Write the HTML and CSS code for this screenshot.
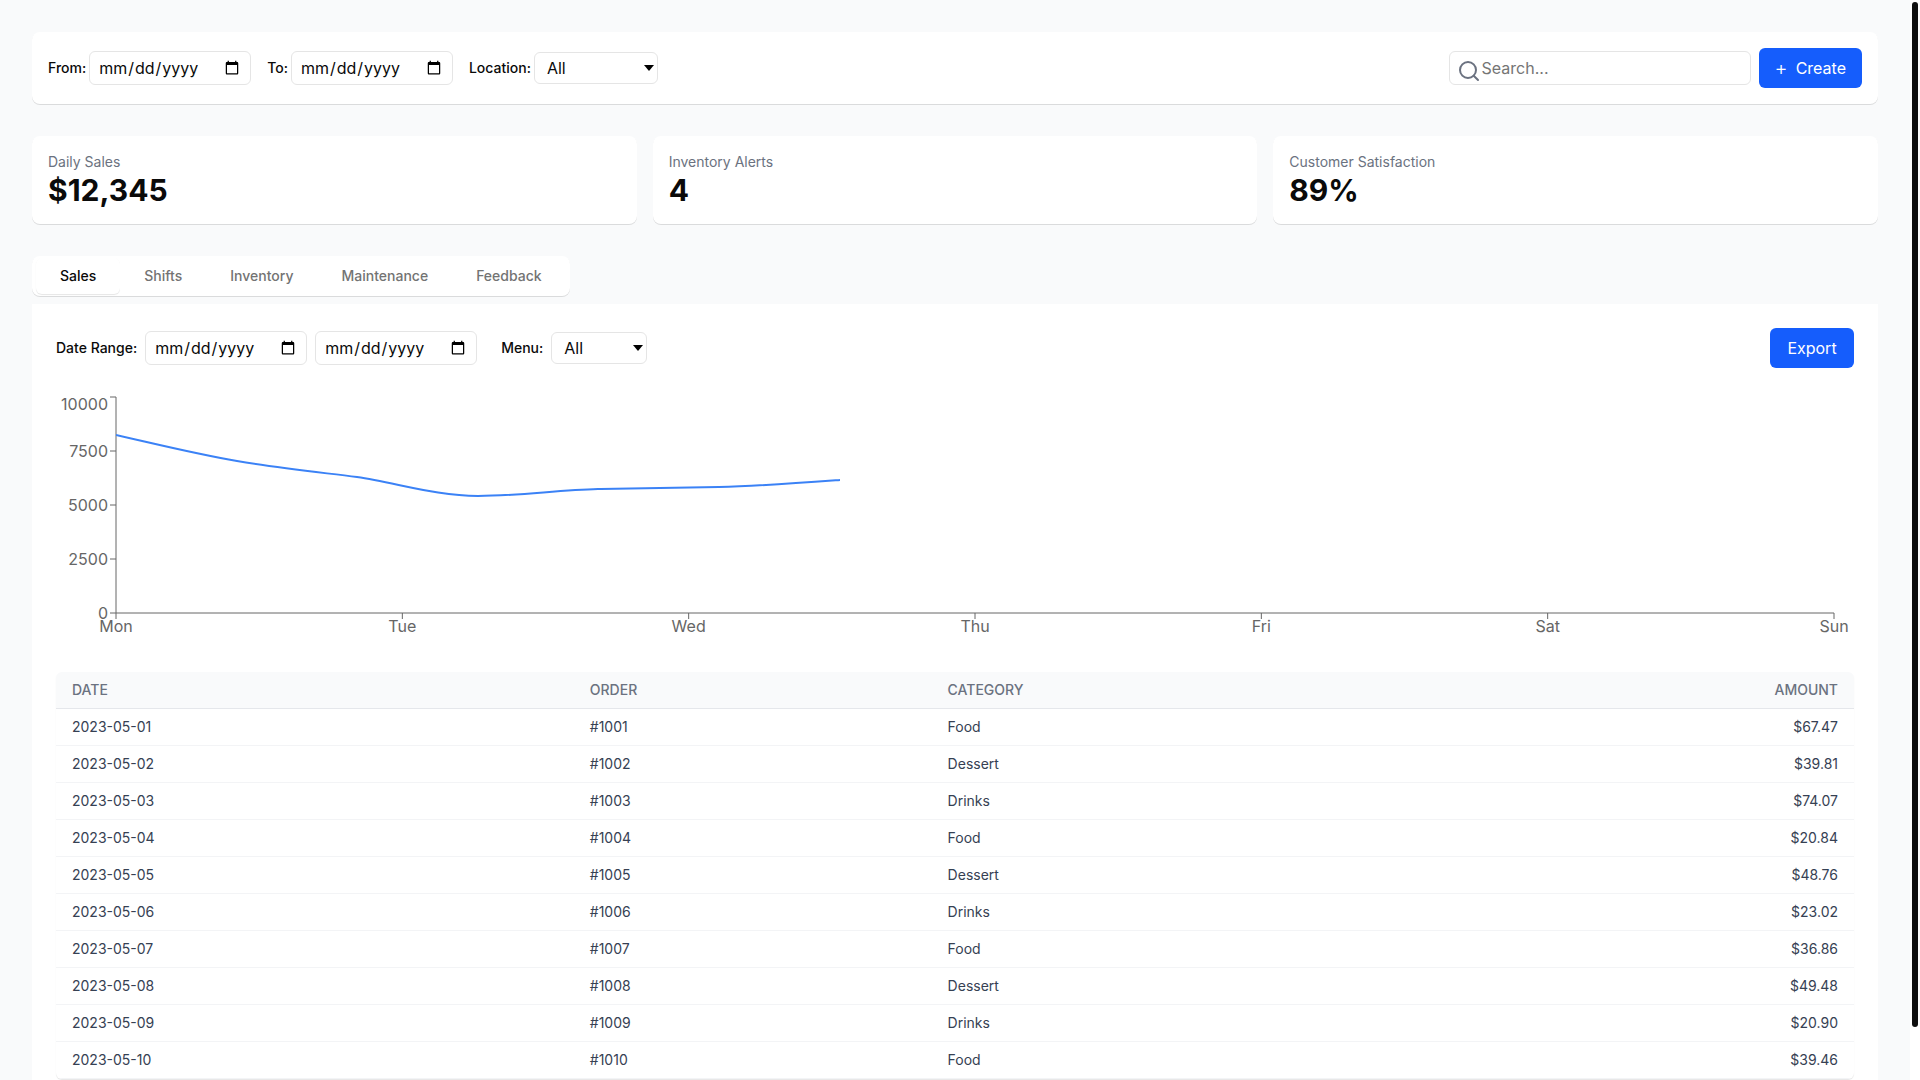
FILE: index.html
```html
<!DOCTYPE html>
<html lang="en">
<head>
<meta charset="utf-8">
<meta name="viewport" content="width=device-width, initial-scale=1">
<title>Restaurant Dashboard</title>
<link rel="stylesheet" href="styles.css">
</head>
<body>
<div class="viewport">
<main class="page">
  <header class="toolbar card">
    <div class="filters">
      <div class="field"><label for="from">From:</label><input class="control" type="date" id="from"></div>
      <div class="field"><label for="to">To:</label><input class="control" type="date" id="to"></div>
      <div class="field"><label for="location">Location:</label><select class="control select-location" id="location"><option>All</option><option>Downtown</option><option>Uptown</option></select></div>
    </div>
    <div class="actions">
      <div class="search">
        <svg class="search-icon" viewBox="0 0 24 24" aria-hidden="true"><circle cx="11" cy="11" r="8"/><path d="m21 21-4.3-4.3"/></svg>
        <input class="control search-input" type="search" placeholder="Search..." aria-label="Search">
      </div>
      <button class="button" type="button"><span class="plus">+</span><span>Create</span></button>
    </div>
  </header>

  <section class="stats">
    <article class="stat card"><h2>Daily Sales</h2><p>$12,345</p></article>
    <article class="stat card"><h2>Inventory Alerts</h2><p>4</p></article>
    <article class="stat card"><h2>Customer Satisfaction</h2><p>89%</p></article>
  </section>

  <section class="reports">
    <div class="tabs card" role="tablist">
      <button class="tab active" role="tab" aria-selected="true" type="button">Sales</button>
      <button class="tab" role="tab" aria-selected="false" type="button">Shifts</button>
      <button class="tab" role="tab" aria-selected="false" type="button">Inventory</button>
      <button class="tab" role="tab" aria-selected="false" type="button">Maintenance</button>
      <button class="tab" role="tab" aria-selected="false" type="button">Feedback</button>
    </div>
    <div class="panel" role="tabpanel">
      <div class="panel-head">
        <div class="panel-filters">
          <div class="field wide"><label for="start">Date Range:</label><input class="control" type="date" id="start"><input class="control" type="date" aria-label="End date"></div>
          <div class="field wide"><label for="menu">Menu:</label><select class="control select-menu" id="menu"><option>All</option><option>Food</option><option>Drinks</option><option>Dessert</option></select></div>
        </div>
        <button class="button" type="button">Export</button>
      </div>

      <div class="chart">
        <svg class="plot" role="img" aria-label="Sales by day">
          <g class="axis">
            <line x1="0" y1="0" x2="0" y2="216"/>
            <line x1="-6" y1="0" x2="0" y2="0"/><line x1="-6" y1="54" x2="0" y2="54"/><line x1="-6" y1="108" x2="0" y2="108"/><line x1="-6" y1="162" x2="0" y2="162"/><line x1="-6" y1="216" x2="0" y2="216"/>
            <line x1="0" y1="216" x2="100%" y2="216"/>
            <line x1="0" y1="216" x2="0" y2="222"/><line x1="16.667%" y1="216" x2="16.667%" y2="222"/><line x1="33.333%" y1="216" x2="33.333%" y2="222"/><line x1="50%" y1="216" x2="50%" y2="222"/><line x1="66.667%" y1="216" x2="66.667%" y2="222"/><line x1="83.333%" y1="216" x2="83.333%" y2="222"/><line x1="100%" y1="216" x2="100%" y2="222"/>
          </g>
          <g class="labels-y"><text x="-8" y="13">10000</text><text x="-8" y="60">7500</text><text x="-8" y="114">5000</text><text x="-8" y="168">2500</text><text x="-8" y="222">0</text></g>
          <g class="labels-x"><text x="0" y="235">Mon</text><text x="16.667%" y="235">Tue</text><text x="33.333%" y="235">Wed</text><text x="50%" y="235">Thu</text><text x="66.667%" y="235">Fri</text><text x="83.333%" y="235">Sat</text><text x="100%" y="235">Sun</text></g>
          <svg width="100%" height="216" viewBox="0 0 1718 216" preserveAspectRatio="none"><path class="series" d="M0 38C40 47 80 57 121 64C161 71 201 75 241 80C281 86 321 99 362 99C402 99 442 93 482 92C522 91 562 91 603 90C643 89 683 86 724 83"/></svg>
        </svg>
      </div>

      <div class="table-wrap">
        <table>
          <thead><tr><th class="col-date">Date</th><th class="col-order">Order</th><th>Category</th><th class="num">Amount</th></tr></thead>
          <tbody>
            <tr><td>2023-05-01</td><td>#1001</td><td>Food</td><td class="num">$67.47</td></tr>
            <tr><td>2023-05-02</td><td>#1002</td><td>Dessert</td><td class="num">$39.81</td></tr>
            <tr><td>2023-05-03</td><td>#1003</td><td>Drinks</td><td class="num">$74.07</td></tr>
            <tr><td>2023-05-04</td><td>#1004</td><td>Food</td><td class="num">$20.84</td></tr>
            <tr><td>2023-05-05</td><td>#1005</td><td>Dessert</td><td class="num">$48.76</td></tr>
            <tr><td>2023-05-06</td><td>#1006</td><td>Drinks</td><td class="num">$23.02</td></tr>
            <tr><td>2023-05-07</td><td>#1007</td><td>Food</td><td class="num">$36.86</td></tr>
            <tr><td>2023-05-08</td><td>#1008</td><td>Dessert</td><td class="num">$49.48</td></tr>
            <tr><td>2023-05-09</td><td>#1009</td><td>Drinks</td><td class="num">$20.90</td></tr>
            <tr><td>2023-05-10</td><td>#1010</td><td>Food</td><td class="num">$39.46</td></tr>
          </tbody>
        </table>
      </div>
    </div>
  </section>
</main>
<div class="scrollbar" aria-hidden="true"><div class="thumb"></div></div>
</div>
</body>
</html>
```
FILE: styles.css
```css
*, *::before, *::after { box-sizing: border-box; }

body {
  margin: 0;
  background: #f9fafb;
  color: #0a0a0a;
  font-family: Inter, "Liberation Sans", sans-serif;
  font-size: 16px;
  line-height: 24px;
}

h2, p { margin: 0; }

input, select, button {
  font: inherit;
  color: inherit;
  margin: 0;
}

.viewport { display: flex; height: 100vh; }

.page {
  flex: 1;
  min-width: 0;
  overflow-y: auto;
  scrollbar-width: none;
  padding: 32px;
}

.page > * + * { margin-top: 32px; }

.scrollbar { width: 10px; padding: 2px; background: #fff; }
.thumb { height: 95.25%; border-radius: 3px; background: #0f0f0f; }

.card {
  background: #fff;
  border-radius: 8px;
  box-shadow: 0 1px 0 rgba(0, 0, 0, 0.12);
}

.toolbar {
  display: flex;
  justify-content: space-between;
  align-items: center;
  padding: 16px;
}

.filters { display: flex; align-items: center; gap: 16px; }
.actions { display: flex; align-items: center; gap: 8px; }
.field { display: flex; align-items: center; gap: 3px; }
.field.wide { gap: 8px; }

label { font-size: 14px; line-height: 20px; font-weight: 500; }

.control {
  border: 1px solid #e5e5e5;
  border-radius: 6px;
  background: #fff;
  padding: 4px 8px;
  height: 34px;
}

input[type="date"] { width: 162px; }

select.control {
  height: 32px;
  padding: 0 12px;
  appearance: none;
  background: #fff url("data:image/svg+xml,%3Csvg xmlns='http://www.w3.org/2000/svg' width='10' height='6'%3E%3Cpath d='M0 0h10L5 6z'/%3E%3C/svg%3E") no-repeat right 3px center;
}

.select-location { width: 124px; }
.select-menu { width: 96px; }

.search { position: relative; }
.search-input { display: block; width: 302px; padding-left: 32px; }
.search-icon {
  position: absolute;
  left: 8px;
  top: 8px;
  width: 24px;
  height: 24px;
  fill: none;
  stroke: #6b7280;
  stroke-width: 2;
  stroke-linecap: round;
}

.button {
  display: flex;
  align-items: center;
  justify-content: center;
  gap: 8px;
  min-width: 84px;
  height: 40px;
  padding: 0 16px;
  border: 0;
  border-radius: 6px;
  background: #155dfc;
  color: #fff;
}

.plus { font-size: 20px; font-weight: 300; }

.stats {
  display: grid;
  grid-template-columns: repeat(3, 1fr);
  gap: 16px;
}

.stat { padding: 16px; }
.stat h2 { color: #6b7280; font-size: 14px; line-height: 20px; font-weight: 400; }
.stat p { font-size: 30px; line-height: 36px; font-weight: 700; }

.reports {
  display: flex;
  flex-direction: column;
  align-items: flex-start;
  gap: 8px;
}

.tabs { display: flex; padding: 2px 4px; }

.tab {
  height: 36px;
  padding: 0 24px;
  border: 0;
  border-radius: 6px;
  background: #fff;
  color: #737373;
  font-size: 14px;
  line-height: 20px;
  font-weight: 500;
}

.tab.active { color: #0a0a0a; box-shadow: 0 1px 1px rgba(0, 0, 0, 0.1); }

.panel { align-self: stretch; background: #fff; padding: 24px; }
.panel-head { display: flex; justify-content: space-between; align-items: center; }
.panel-filters { display: flex; gap: 24px; }

.chart { margin-top: 24px; padding: 5px 20px 35px 60px; }
.plot { display: block; width: 100%; height: 216px; overflow: visible; }
.axis line { stroke: #666; stroke-width: 1; }
.plot text { fill: #666; font-size: 16px; }
.labels-y { text-anchor: end; }
.labels-x { text-anchor: middle; }
.series { fill: none; stroke: #3b82f6; stroke-width: 2; vector-effect: non-scaling-stroke; }

.table-wrap {
  margin-top: 24px;
  overflow: hidden;
  border-radius: 6px;
  box-shadow: 0 1px 1px rgba(0, 0, 0, 0.1);
}

table { width: 100%; border-collapse: collapse; font-size: 14px; line-height: 20px; }
th, td { padding: 8px 16px; text-align: left; }
th { color: #6b7280; font-weight: 500; text-transform: uppercase; }
thead { background: #f9fafb; }
thead tr { border-bottom: 1px solid #e5e7eb; }
td { color: #364153; }
tbody tr { border-bottom: 1px solid #f3f4f6; }
.col-date { width: 28.8%; }
.col-order { width: 19.9%; }
th.num, td.num { text-align: right; }
```
